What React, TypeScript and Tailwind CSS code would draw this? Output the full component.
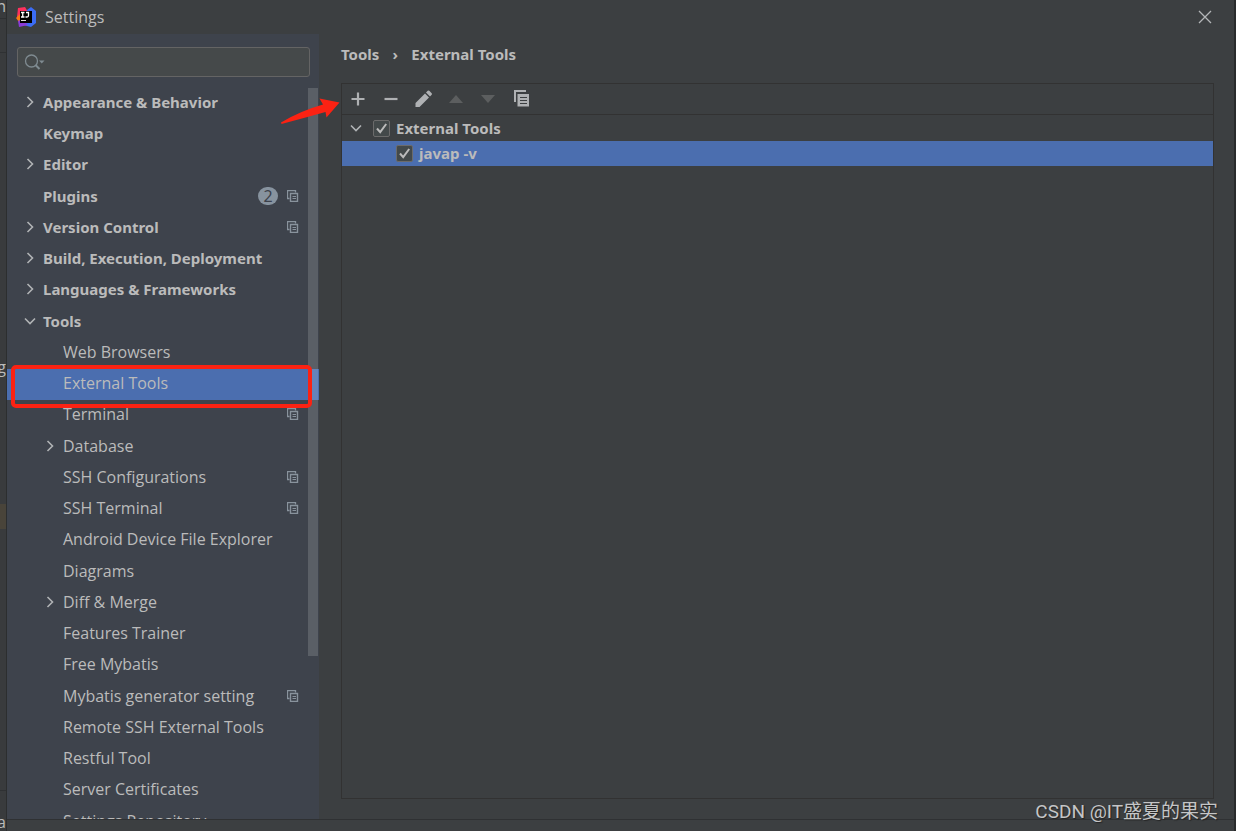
import React from "react";

type Item = {
  label: string;
  level?: number;
  arrow?: "right" | "down";
  copy?: boolean;
  badge?: string;
  selected?: boolean;
};

const items: Item[] = [
  { label: "Appearance & Behavior", arrow: "right" },
  { label: "Keymap" },
  { label: "Editor", arrow: "right" },
  { label: "Plugins", badge: "2", copy: true },
  { label: "Version Control", arrow: "right", copy: true },
  { label: "Build, Execution, Deployment", arrow: "right" },
  { label: "Languages & Frameworks", arrow: "right" },
  { label: "Tools", arrow: "down" },
  { label: "Web Browsers", level: 1 },
  { label: "External Tools", level: 1, selected: true },
  { label: "Terminal", level: 1, copy: true },
  { label: "Database", level: 1, arrow: "right" },
  { label: "SSH Configurations", level: 1, copy: true },
  { label: "SSH Terminal", level: 1, copy: true },
  { label: "Android Device File Explorer", level: 1 },
  { label: "Diagrams", level: 1 },
  { label: "Diff & Merge", level: 1, arrow: "right" },
  { label: "Features Trainer", level: 1 },
  { label: "Free Mybatis", level: 1 },
  { label: "Mybatis generator setting", level: 1, copy: true },
  { label: "Remote SSH External Tools", level: 1 },
  { label: "Restful Tool", level: 1 },
  { label: "Server Certificates", level: 1 },
  { label: "Settings Repository", level: 1 },
];

const boldText = "font-['Noto_Sans',sans-serif] text-[15px] font-bold";

function Logo() {
  return (
    <svg width="20" height="20" viewBox="0 0 20 20" aria-hidden="true">
      <path d="M2 1l7-1 3 5-8 8-3-3z" fill="#fe315d" />
      <path d="M0 11l4-4 3 6-4 2z" fill="#f97a12" />
      <path d="M11 3l4-3 5 4v12l-5 4-8-2z" fill="#3b6cf5" />
      <path d="M2 14l4-2 6 6-9 2z" fill="#8a3bd8" />
      <path d="M4 4h12v12H4z" fill="#000" />
      <path
        d="M5 5.500h3.500M6.750 5.500v4.500M5 10h3.500M10 5.500h2.500v3q0 1.500-1.500 1.500H9.500"
        fill="none"
        stroke="#fff"
        strokeWidth="1.300"
      />
      <path d="M5 13.500h5" stroke="#ddd" strokeWidth="1" />
    </svg>
  );
}

function Chevron({ dir }: { dir: "right" | "down" }) {
  return (
    <svg
      width="12"
      height="12"
      viewBox="0 0 12 12"
      fill="none"
      stroke="#b0b3b5"
      strokeWidth="1.600"
      aria-hidden="true"
    >
      <path d={dir === "right" ? "M3.500 1l5 5-5 5" : "M1 3.500l5 5 5-5"} />
    </svg>
  );
}

function ProjectIcon() {
  return (
    <svg
      width="12"
      height="12"
      viewBox="0 0 12 12"
      fill="none"
      stroke="#89939d"
      aria-hidden="true"
    >
      <path d="M2.500 8.500H.5v-8h8v2" strokeWidth="1.300" />
      <path d="M3.500 3.500h7v8h-7z" strokeWidth="1.400" />
      <path d="M5.500 6.500h3.500M5.500 8.500h3.500" />
    </svg>
  );
}

function Check({ label }: { label: string }) {
  return (
    <label className={`flex items-center ${boldText}`}>
      <span className="relative mr-1.5 h-[17px] w-[17px]">
        <input
          type="checkbox"
          defaultChecked
          className="peer block h-[17px] w-[17px] appearance-none rounded-xs border border-[#6b6b6b] bg-[#43494a]"
        />
        <svg
          className="pointer-events-none absolute inset-0 hidden peer-checked:block"
          width="17"
          height="17"
          viewBox="0 0 17 17"
          fill="none"
          stroke="#bbbbbb"
          strokeWidth="2"
          aria-hidden="true"
        >
          <path d="M4 8.500l3.200 3.700L13.200 4" />
        </svg>
      </span>
      {label}
    </label>
  );
}

function Row({ item }: { item: Item }) {
  return (
    <li className="h-[31px] nth-[4n+3]:h-8">
      <button
        className={`flex h-[31px] w-full items-center pr-5 pb-[3px] text-left whitespace-nowrap ${
          item.level ? "pl-[37px]" : `pl-[17px] ${boldText}`
        } ${item.selected ? "bg-[#4b6eaf]" : ""}`}
      >
        <span className="flex w-[19px] shrink-0">
          {item.arrow && <Chevron dir={item.arrow} />}
        </span>
        <span className="flex-1">{item.label}</span>
        {item.badge && (
          <span className="mr-[9px] flex h-[18px] w-5 items-center justify-center rounded-full bg-[#87939f] text-base font-normal text-[#3c414b]">
            {item.badge}
          </span>
        )}
        {item.copy && <ProjectIcon />}
      </button>
    </li>
  );
}

function Sidebar() {
  return (
    <aside className="flex w-[312px] shrink-0 flex-col bg-[#3e434c]">
      <div className="pt-[13px] pr-[9px] pb-[11px] pl-2.5">
        <label className="flex h-[30px] items-center rounded-[3px] border border-[#646464] bg-[#45494a] px-1.5">
          <svg
            width="22"
            height="18"
            viewBox="0 0 22 18"
            fill="none"
            stroke="#7f8b91"
            strokeWidth="1.300"
            aria-hidden="true"
          >
            <circle cx="7.500" cy="8" r="6" />
            <path d="M11.500 12l4 4" strokeWidth="2" />
            <path d="M15 7.500h5.500l-2.750 3z" fill="#7f8b91" stroke="none" />
          </svg>
          <input
            type="text"
            aria-label="Search settings"
            className="min-w-0 flex-1 bg-transparent outline-none"
          />
        </label>
      </div>
      <div className="relative min-h-0 flex-1">
        <ul className="h-full overflow-hidden">
          {items.map((item) => (
            <Row key={item.label} item={item} />
          ))}
        </ul>
        <div className="absolute top-0 right-px h-[568px] w-2.5 bg-white/15" />
        {/* highlight around the selected entry */}
        <div className="absolute top-[277px] right-[7px] left-1 h-[43px] rounded-[5px] border-4 border-[#fb2213]" />
        <svg
          className="absolute top-2.5 left-[273px]"
          width="60"
          height="28"
          viewBox="0 0 60 28"
          aria-hidden="true"
        >
          <path
            d="M1 24.500Q20 13 43 6.500L39.500 0.500 59.500 4.500 46.500 19.500 45.500 14Q24 20 1.500 26z"
            fill="#fb2213"
          />
        </svg>
      </div>
    </aside>
  );
}

const toolButton = "flex h-[30px] w-[18px] items-center justify-center";

function Toolbar() {
  return (
    <div className="flex gap-[15px] border-b border-[#323232] px-[7px]">
      <button className={toolButton} aria-label="Add">
        <svg width="18" height="18" viewBox="0 0 18 18">
          <path d="M9 2.500v13M2.500 9h13" stroke="#afb1b3" strokeWidth="2.200" />
        </svg>
      </button>
      <button className={toolButton} aria-label="Remove">
        <svg width="18" height="18" viewBox="0 0 18 18">
          <path d="M2.500 9h13" stroke="#afb1b3" strokeWidth="2.200" />
        </svg>
      </button>
      <button className={toolButton} aria-label="Edit">
        <svg width="18" height="18" viewBox="0 0 18 18" fill="#afb1b3">
          <path d="M.5 17V13L10 3.500l4 4L4.500 17zM11 2.500l1.700-1.700q.8-.6 1.600 0l2.400 2.400q.6.800 0 1.600L15 6.500z" />
        </svg>
      </button>
      <button className={toolButton} aria-label="Move up">
        <svg width="18" height="18" viewBox="0 0 18 18">
          <path d="M1 13l7-8 7 8z" fill="#5c5e5f" />
        </svg>
      </button>
      <button className={toolButton} aria-label="Move down">
        <svg width="18" height="18" viewBox="0 0 18 18">
          <path d="M0 5l7 8 7-8z" fill="#5c5e5f" />
        </svg>
      </button>
      <button className={toolButton} aria-label="Copy">
        <svg width="18" height="18" viewBox="0 0 18 18">
          <path d="M1 12V1h11" fill="none" stroke="#afb1b3" strokeWidth="2" />
          <path d="M3.500 4H15v12.500H3.500z" fill="#afb1b3" />
          <path
            d="M6 7.500h7M6 10.500h7M6 13.500h7"
            stroke="#3c3f41"
            strokeWidth="1.200"
          />
        </svg>
      </button>
    </div>
  );
}

export default function App() {
  return (
    <main className="flex h-screen overflow-hidden bg-[#3c3f41] font-['Open_Sans','Noto_Sans_CJK_SC',sans-serif] text-base text-[#bbbbbb]">
      {/* sliver of the editor behind the dialog */}
      <div className="flex w-[7px] shrink-0 flex-col overflow-hidden border-r border-[#2c2e2f] bg-[#393b3d] leading-[18px]">
        <div className="flex h-[19px] justify-end border-b border-[#2f3133] leading-3">
          n
        </div>
        <div className="h-[34px] border-b border-[#2f3133]" />
        <div className="flex h-[451px] items-end justify-end pb-[128px]">g</div>
        <div className="h-[25px] shrink-0 bg-[#49443a]" />
        <div className="flex-1 border-b border-[#2f3133]" />
        <div className="flex h-10 items-end justify-end">a</div>
      </div>

      <section className="relative flex min-w-0 flex-1 flex-col">
        <header className="flex h-[34px] shrink-0 items-center pr-[22px] pl-[9px]">
          <Logo />
          <h1 className="ml-[9px] flex-1">Settings</h1>
          <button aria-label="Close">
            <svg width="14" height="14" viewBox="0 0 14 14">
              <path
                d="M1 1l12 12M13 1L1 13"
                stroke="#b4b6b8"
                strokeWidth="1.300"
              />
            </svg>
          </button>
        </header>

        <div className="flex min-h-0 flex-1">
          <Sidebar />
          <div className="flex min-w-0 flex-1 flex-col pr-5 pb-5 pl-[22px]">
            <nav className={`flex h-[49px] items-center pb-2 ${boldText}`}>
              <a href="#tools">Tools</a>
              <span className="w-8 text-center">›</span>
              <a href="#external-tools">External Tools</a>
            </nav>
            <div className="flex-1 border border-[#323232]">
              <Toolbar />
              <div className="flex h-[26px] items-center pl-2">
                <span className="mr-[11px]">
                  <Chevron dir="down" />
                </span>
                <Check label="External Tools" />
              </div>
              <div className="flex h-[25px] items-center bg-[#4b6eaf] pl-[54px]">
                <Check label="javap -v" />
              </div>
            </div>
          </div>
        </div>

        <footer className="h-3 shrink-0 border-t border-[#2f3133]" />

        <p className="absolute right-4 bottom-[5px] font-[Roboto,'Noto_Sans_CJK_SC',sans-serif] text-[19px] leading-7 text-[#c4c5c6] [text-shadow:1px_1px_1px_#222]">
          CSDN @IT盛夏的果实
        </p>
      </section>
      <div className="w-0.5 shrink-0 bg-[#292b2c]" />
    </main>
  );
}
